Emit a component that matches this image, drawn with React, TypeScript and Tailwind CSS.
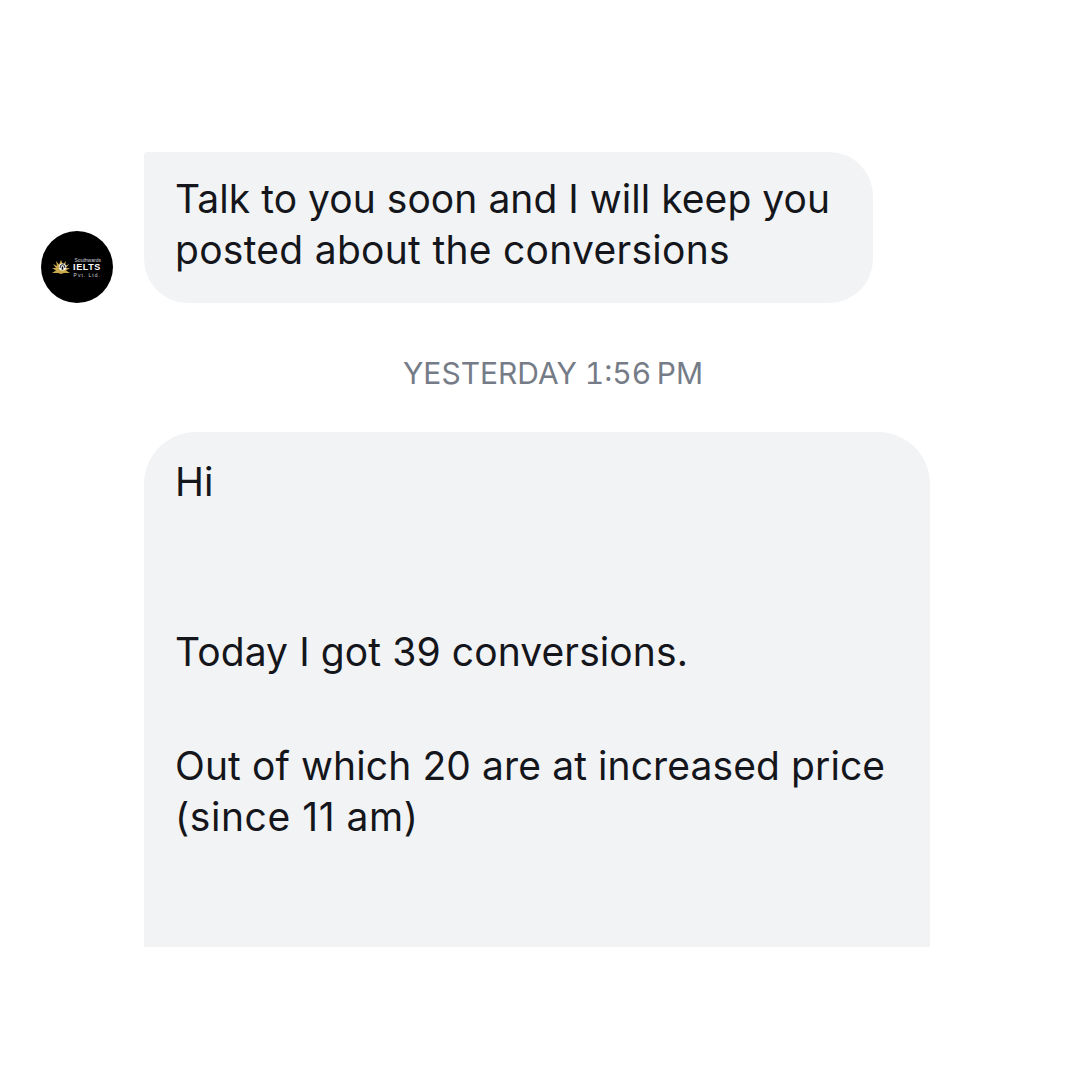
export default function App() {
  return (
    <div className="h-[1080px] w-[1080px] overflow-hidden bg-white pt-[152px] font-['Inter','Liberation_Sans',sans-serif] text-[39px] leading-[51px] tracking-[0.1px] text-[#14161b]">
      {/* First message */}
      <div className="flex items-end pl-[41px]">
        <div className="flex h-[72px] w-[72px] items-center justify-center gap-[2px] rounded-full bg-black pr-[2px]">
          <svg viewBox="0 0 20 16" className="h-[16px] w-[20px]">
            <path d="M10 15 L7 14 L1 14 L5 11.5 L1 9 L5 9 L2 5 L6 7 L5 2 L8 5.5 L10 1 L12 5.5 L15 2 L14 7 L18 5 L15 9 L19 9 L15 11.5 L19 14 L13 14 Z" fill="#c9a94c" />
            <circle cx="11.5" cy="8" r="3.6" fill="#fff" />
            <path d="M9.2 9 V8 a2.3 2.3 0 0 1 4.6 0 V9" fill="none" stroke="#000" strokeWidth="0.9" />
            <rect x="10.7" y="7.5" width="1.6" height="3.2" fill="#000" />
          </svg>
          <div className="flex flex-col items-end font-['Liberation_Sans',sans-serif] tracking-normal text-white">
            <span className="text-[5px] leading-[6px] text-gray-300">Southwards</span>
            <span className="text-[9px] font-bold leading-[9px] tracking-[0.6px]">IELTS</span>
            <span className="text-[5px] leading-[6px] tracking-[1px] text-gray-300">Pvt. Ltd.</span>
          </div>
        </div>
        <div className="ml-[31px] h-[151px] w-[729px] rounded-[44px] rounded-tl-[4px] bg-[#f2f3f5] px-[31px] pt-[21px]">
          <p className="tracking-[0.04px]">Talk to you soon and I will keep you</p>
          <p className="tracking-[0.28px]">posted about the conversions</p>
        </div>
      </div>

      {/* Timestamp */}
      <div className="mt-[52px] pl-[26px] text-center text-[30px] leading-[36px] tracking-normal text-[#767c87] tabular-nums">
        YESTERDAY 1:56{'\u2009'}PM
      </div>

      {/* Second message */}
      <div className="ml-[144px] mt-[41px] h-[515px] w-[786px] rounded-t-[52px] bg-[#f2f3f5] px-[31px] pt-[24px]">
        <p>Hi</p>
        <p className="mt-[119px]">Today I got 39 conversions.</p>
        <p className="mt-[63px]">Out of which 20 are at increased price</p>
        <p className="tracking-[0.56px]">(since 11 am)</p>
      </div>
    </div>
  )
}
